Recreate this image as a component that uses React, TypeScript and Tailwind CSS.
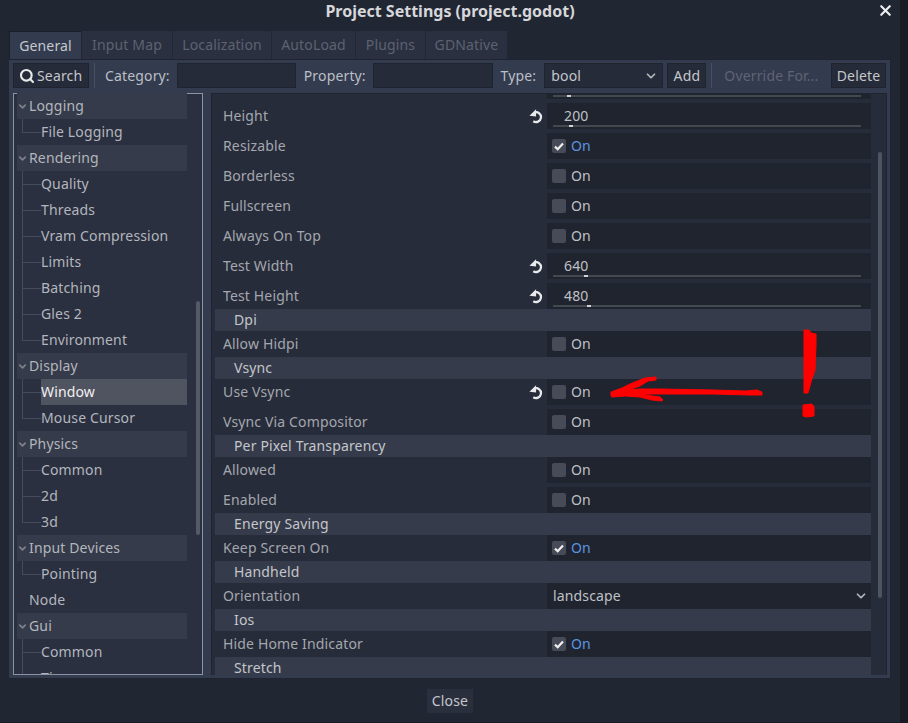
import React from "react";
import { Search, X, ChevronDown } from "lucide-react";

const tabs = [
  ["General", "w-[72px]"],
  ["Input Map", "w-[90px]"],
  ["Localization", "w-[98px]"],
  ["AutoLoad", "w-[83px]"],
  ["Plugins", "w-[69px]"],
  ["GDNative", "w-[81px]"],
];

type TreeGroup = { name: string; kids: string[]; selected?: string; plain?: boolean };
const tree: TreeGroup[] = [
  { name: "Logging", kids: ["File Logging"] },
  { name: "Rendering", kids: ["Quality", "Threads", "Vram Compression", "Limits", "Batching", "Gles 2", "Environment"] },
  { name: "Display", kids: ["Window", "Mouse Cursor"], selected: "Window" },
  { name: "Physics", kids: ["Common", "2d", "3d"] },
  { name: "Input Devices", kids: ["Pointing"] },
  { name: "Node", kids: [], plain: true },
  { name: "Gui", kids: ["Common", "Timers"] },
];

function ResetIcon() {
  return (
    <svg width="15" height="15" viewBox="0 0 14 14" className="shrink-0">
      <path d="M5.2 3.2 A4.6 4.6 0 1 1 4 11.4" fill="none" stroke="#e8e9eb" strokeWidth="2.1" />
      <path d="M6.6 0.2 V7 L0.4 6.4 Z" fill="#e8e9eb" />
    </svg>
  );
}

function Check({ on }: { on: boolean }) {
  return (
    <div className="flex items-center h-full pl-[5px]">
      <span className="w-[14px] h-[14px] rounded-[2px] bg-[#474b57] flex items-center justify-center">
        {on && (
          <svg width="10" height="9" viewBox="0 0 10 9">
            <path d="M1 4.6 L3.7 7.2 L9 1.4" fill="none" stroke="#f0f0f2" strokeWidth="2.2" />
          </svg>
        )}
      </span>
      <span className={on ? "ml-[5px] text-[#5c94e0]" : "ml-[5px] text-[#bfc1c6]"}>On</span>
    </div>
  );
}

function Slider({ v, pos }: { v: string; pos: string }) {
  return (
    <div className="relative h-full pl-[17px] flex items-center text-[#bfc1c6]">
      {v}
      <div className="absolute left-[6px] right-[10px] bottom-[2px] h-[2px] bg-[#44484f]">
        <div className={"absolute top-0 w-[4px] h-[2px] bg-[#d0d2d6] " + pos} />
      </div>
    </div>
  );
}

function Row({ label, reset, children }: { label: string; reset?: boolean; children: React.ReactNode }) {
  return (
    <div className="flex h-[26px] shrink-0">
      <div className="w-[332px] pl-[8px] pr-[3px] flex items-center justify-between text-[#a4a7ad]">
        <span>{label}</span>
        {reset && <ResetIcon />}
      </div>
      <div className="flex-1 bg-[#20242f]">{children}</div>
    </div>
  );
}

function Section({ label }: { label: string }) {
  return (
    <div className="h-[22px] shrink-0 bg-[#353b4a] pl-[19px] flex items-center text-[#c4c6cb]">{label}</div>
  );
}

function Btn({ children, cls }: { children: React.ReactNode; cls: string }) {
  return (
    <div className={"h-[25px] bg-[#262b39] border border-[#1f2430] flex items-center text-[#c4c6cb] shrink-0 " + cls}>
      {children}
    </div>
  );
}

function Field({ cls }: { cls: string }) {
  return <div className={"h-[25px] bg-[#262b39] border border-[#1f2430] shrink-0 " + cls} />;
}

function Tree() {
  return (
    <div className="relative w-[190px] h-[582px] border-l border-r border-b border-[#8c93a5] overflow-hidden shrink-0 bg-[#2a3040]">
      <div className="absolute left-0 top-0 w-[3px] h-px bg-[#8c93a5]" />
      <div className="absolute right-0 top-0 w-[15px] h-px bg-[#8c93a5]" />
      <div className="pl-[3px] w-[173px] text-[#b3b6bc]">
        {tree.map((g) => (
          <div key={g.name}>
            <div className={"h-[26px] flex items-center pl-[12px] relative " + (g.plain ? "" : "bg-[#353b4a]")}>
              {!g.plain && (
                <ChevronDown size={11} strokeWidth={4} className="absolute left-[0px] top-[8px] text-[#7b7f8a]" />
              )}
              {g.name}
            </div>
            {g.kids.map((k, i) => {
              const last = i === g.kids.length - 1;
              const sel = g.selected === k;
              return (
                <div key={k} className="h-[26px] relative flex items-center pl-[24px]">
                  <span className={"absolute left-[5px] top-0 w-px bg-[#454b5b] " + (last ? "h-[13px]" : "h-[26px]")} />
                  <span className="absolute left-[5px] top-[13px] w-[19px] h-px bg-[#454b5b]" />
                  {sel && <span className="absolute left-[24px] right-0 inset-y-0 bg-[#505461]" />}
                  <span className={"relative " + (sel ? "text-[#f0f0f2]" : "")}>{k}</span>
                </div>
              );
            })}
          </div>
        ))}
      </div>
      <div className="absolute right-[2px] top-[208px] w-[4px] h-[234px] bg-[#555a67] rounded-sm" />
    </div>
  );
}

function Props() {
  return (
    <div className="relative w-[676px] h-[582px] bg-[#272c3b] border-l border-t border-r border-[#1f2430] overflow-hidden shrink-0">
      <div className="pl-[3px] w-[659px] -mt-[21px] flex flex-col">
        <div className="flex flex-col gap-[4px]">
          <Row label=""><Slider v="" pos="left-[14px]" /></Row>
          <Row label="Height" reset><Slider v="200" pos="left-[16px]" /></Row>
          <Row label="Resizable"><Check on /></Row>
          <Row label="Borderless"><Check on={false} /></Row>
          <Row label="Fullscreen"><Check on={false} /></Row>
          <Row label="Always On Top"><Check on={false} /></Row>
          <Row label="Test Width" reset><Slider v="640" pos="left-[31px]" /></Row>
          <Row label="Test Height" reset><Slider v="480" pos="left-[34px]" /></Row>
        </div>
        <Section label="Dpi" />
        <Row label="Allow Hidpi"><Check on={false} /></Row>
        <Section label="Vsync" />
        <div className="flex flex-col gap-[4px]">
          <Row label="Use Vsync" reset><Check on={false} /></Row>
          <Row label="Vsync Via Compositor"><Check on={false} /></Row>
        </div>
        <Section label="Per Pixel Transparency" />
        <div className="flex flex-col gap-[4px]">
          <Row label="Allowed"><Check on={false} /></Row>
          <Row label="Enabled"><Check on={false} /></Row>
        </div>
        <Section label="Energy Saving" />
        <Row label="Keep Screen On"><Check on /></Row>
        <Section label="Handheld" />
        <Row label="Orientation">
          <div className="h-full pl-[6px] pr-[3px] flex items-center justify-between text-[#bfc1c6]">
            landscape
            <ChevronDown size={14} strokeWidth={3} className="text-[#b5b7bc]" />
          </div>
        </Row>
        <Section label="Ios" />
        <Row label="Hide Home Indicator"><Check on /></Row>
        <Section label="Stretch" />
      </div>
      <div className="absolute right-[4px] top-[58px] w-[4px] h-[446px] bg-[#4f5461] rounded-sm" />
    </div>
  );
}

export default function App() {
  return (
    <div className="relative w-[908px] h-[723px] overflow-hidden bg-[#181b24] text-[14px] leading-none tracking-[0.15px]" style={{ fontFamily: '"Noto Sans", sans-serif' }}>
      <div className="w-[900px] h-[722px] bg-[#212633] flex flex-col">
        <div className="h-[31px] relative flex items-center justify-center text-[16px] font-bold tracking-normal text-[#d6d7da] pb-[9px] shrink-0">
          Project Settings (project.godot)
          <X size={17} strokeWidth={3} className="absolute left-[877px] top-[2px] text-[#eeeff1]" />
        </div>
        <div className="h-[28px] ml-[9px] flex gap-px shrink-0">
          {tabs.map(([t, w], i) => (
            <div
              key={t}
              className={
                "flex items-center justify-center shrink-0 " + w + " " +
                (i === 0 ? "bg-[#333b4f] text-[#c6c8cd] border-t border-l border-[#1b1f2a]" : "bg-[#2a3040] text-[#5d6270]")
              }
            >
              {t}
            </div>
          ))}
        </div>
        <div className="ml-[9px] w-[882px] h-[620px] bg-[#333b4f] border-r border-b border-t border-[#1f2430] px-[4px] pt-[3px] shrink-0">
          <div className="flex items-center h-[25px]">
            <Btn cls="w-[76px] pl-[5px] gap-[2px]">
              <Search size={16} strokeWidth={3.2} className="text-[#e8e9eb]" />
              Search
            </Btn>
            <div className="w-px h-[25px] bg-[#474e61] ml-[5px]" />
            <span className="ml-[10px] w-[72px] text-[#bcbfc5]">Category:</span>
            <Field cls="w-[119px]" />
            <span className="ml-[8px] w-[69px] text-[#bcbfc5]">Property:</span>
            <Field cls="w-[120px]" />
            <span className="ml-[8px] w-[44px] text-[#bcbfc5]">Type:</span>
            <Btn cls="w-[119px] pl-[6px] pr-[4px] justify-between">
              bool
              <ChevronDown size={14} strokeWidth={3} className="text-[#b5b7bc]" />
            </Btn>
            <Btn cls="w-[39px] ml-[4px] justify-center">Add</Btn>
            <div className="w-px h-[25px] bg-[#474e61] ml-[5px]" />
            <span className="ml-[12px] w-[107px] text-[#5f6473] whitespace-nowrap">Override For...</span>
            <Btn cls="w-[55px] justify-center">Delete</Btn>
          </div>
          <div className="flex gap-[8px] mt-[5px]">
            <Tree />
            <Props />
          </div>
        </div>
        <div className="flex justify-center pt-[10px]">
          <div className="w-[46px] h-[24px] bg-[#2a2f3e] text-[#c4c6cb] flex items-center justify-center">Close</div>
        </div>
      </div>
      <svg className="absolute left-0 top-0 pointer-events-none" width="908" height="723" viewBox="0 0 908 723">
        <g fill="#ff0000" stroke="#ff0000" strokeWidth="1">
          <polygon points="611,392 622,388 630,384 640,380 645,378 656,377 656,380 648,381 640,386 628,390 640,389 660,389 713,390 745,391 757,390 762,392 762,395 750,395 713,394 660,394 642,394 652,396 660,397 663,400 662,401 652,400 640,397 625,396 612,397 611,396" />
          <polygon points="804,330 809,330 811,333 816,334 816,345 815,370 811,382 808,393 804,393 804,360" />
          <polygon points="803,405 812,404 814,407 814,416 806,417 803,416" />
        </g>
      </svg>
    </div>
  );
}
